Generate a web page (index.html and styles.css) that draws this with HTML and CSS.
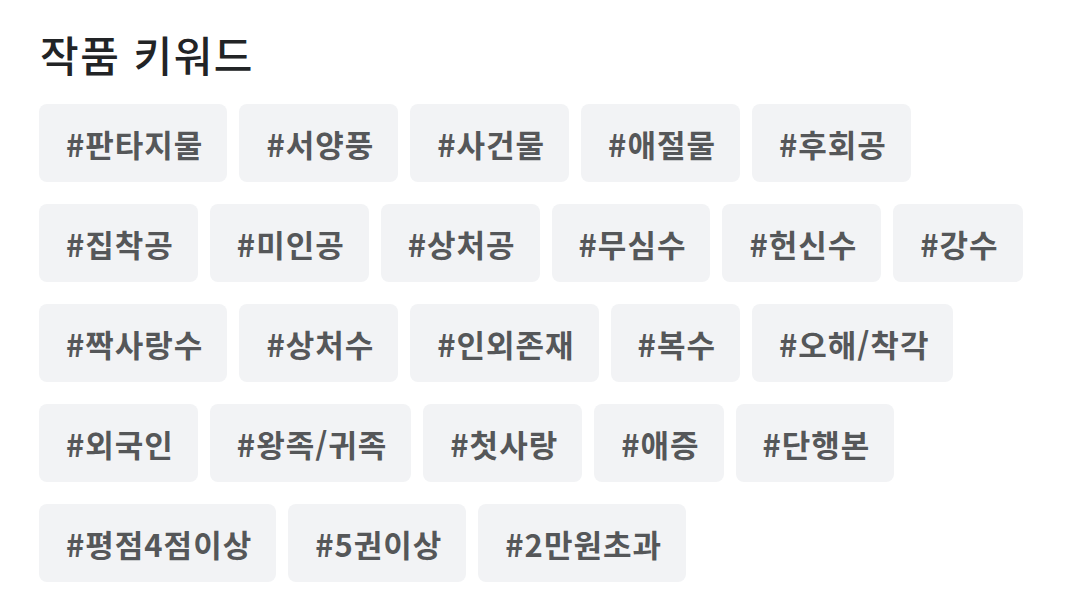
FILE: index.html
```html
<!DOCTYPE html>
<html lang="ko">
<head>
<meta charset="utf-8">
<link rel="stylesheet" href="styles.css">
</head>
<body>
<section class="keywords">
  <h2 class="title">작품 키워드</h2>
  <ul class="tags">
    <li class="tag">#판타지물</li>
    <li class="tag">#서양풍</li>
    <li class="tag">#사건물</li>
    <li class="tag">#애절물</li>
    <li class="tag">#후회공</li>
    <li class="tag">#집착공</li>
    <li class="tag">#미인공</li>
    <li class="tag">#상처공</li>
    <li class="tag">#무심수</li>
    <li class="tag">#헌신수</li>
    <li class="tag">#강수</li>
    <li class="tag">#짝사랑수</li>
    <li class="tag">#상처수</li>
    <li class="tag">#인외존재</li>
    <li class="tag">#복수</li>
    <li class="tag">#오해/착각</li>
    <li class="tag">#외국인</li>
    <li class="tag">#왕족/귀족</li>
    <li class="tag">#첫사랑</li>
    <li class="tag">#애증</li>
    <li class="tag">#단행본</li>
    <li class="tag">#평점4점이상</li>
    <li class="tag">#5권이상</li>
    <li class="tag">#2만원초과</li>
  </ul>
</section>
</body>
</html>
```

FILE: styles.css
```css
html, body {
  margin: 0;
  padding: 0;
  background: #ffffff;
}

body {
  font-family: "Noto Sans CJK KR", "Noto Sans", sans-serif;
}

.keywords {
  padding: 25px 39px 0 39px;
}

.title {
  margin: 0 0 21px 1px;
  font-size: 42px;
  font-weight: 500;
  line-height: 58px;
  letter-spacing: 1.5px;
  color: #222426;
}

.tags {
  list-style: none;
  margin: 0;
  padding: 0;
  display: flex;
  flex-wrap: wrap;
  column-gap: 12px;
  row-gap: 22px;
}

.tag {
  display: flex;
  align-items: center;
  height: 78px;
  padding: 0 24px 0 27px;
  background: #f2f3f5;
  border-radius: 8px;
  font-size: 31px;
  font-weight: 700;
  letter-spacing: 1px;
  color: #555759;
  box-sizing: border-box;
}
```
